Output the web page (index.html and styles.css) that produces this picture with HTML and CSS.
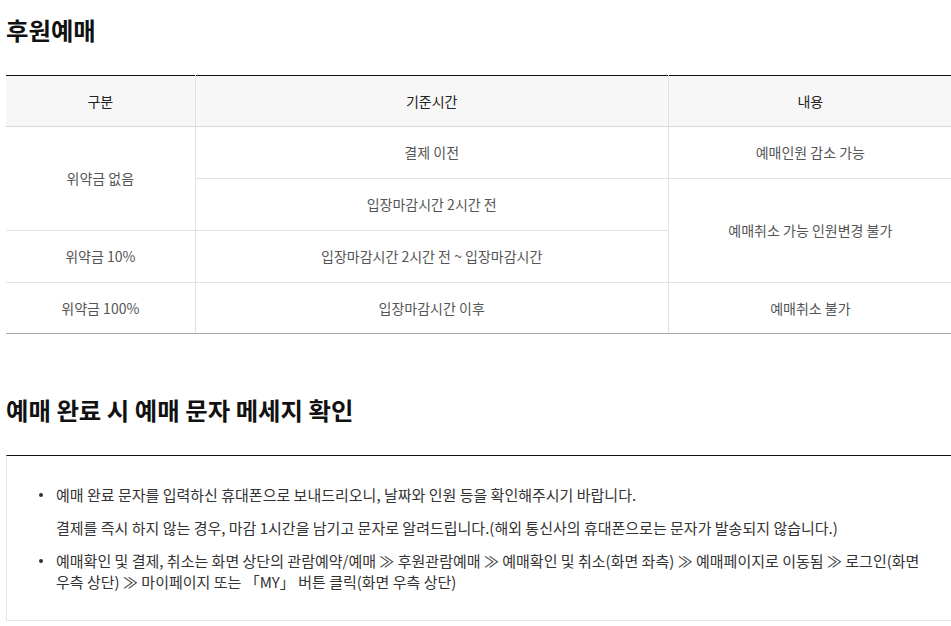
FILE: index.html
```html
<!DOCTYPE html>
<html>
<head>
    <title>후원예매</title>
    <meta charset="UTF-8">
    <link rel="stylesheet" href="styles.css">
</head>
<body>
    <div class="wrap">
        <h2 class="title">후원예매</h2>

        <table class="fee-table">
            <colgroup>
                <col class="col-type">
                <col class="col-time">
                <col class="col-desc">
            </colgroup>
            <thead>
                <tr>
                    <th class="first">구분</th>
                    <th>기준시간</th>
                    <th>내용</th>
                </tr>
            </thead>
            <tbody>
                <tr>
                    <td class="first" rowspan="2">위약금 없음</td>
                    <td>결제 이전</td>
                    <td>예매인원 감소 가능</td>
                </tr>
                <tr>
                    <td>입장마감시간 2시간 전</td>
                    <td rowspan="2">예매취소 가능 인원변경 불가</td>
                </tr>
                <tr>
                    <td class="first">위약금 10%</td>
                    <td>입장마감시간 2시간 전 ~ 입장마감시간</td>
                </tr>
                <tr>
                    <td class="first">위약금 100%</td>
                    <td>입장마감시간 이후</td>
                    <td>예매취소 불가</td>
                </tr>
            </tbody>
        </table>

        <h2 class="title title-second">예매 완료 시 예매 문자 메세지 확인</h2>

        <div class="notice-box">
            <ul>
                <li>
                    <p>예매 완료 문자를 입력하신 휴대폰으로 보내드리오니, 날짜와 인원 등을 확인해주시기 바랍니다.</p>
                    <p>결제를 즉시 하지 않는 경우, 마감 1시간을 남기고 문자로 알려드립니다.(해외 통신사의 휴대폰으로는 문자가 발송되지 않습니다.)</p>
                </li>
                <li>
                    <p>예매확인 및 결제, 취소는 화면 상단의 관람예약/예매 ≫ 후원관람예매 ≫ 예매확인 및 취소(화면 좌측) ≫ 예매페이지로 이동됨 ≫ 로그인(화면 우측 상단) ≫ 마이페이지 또는 「MY」 버튼 클릭(화면 우측 상단)</p>
                </li>
            </ul>
        </div>
    </div>
</body>
</html>
```

FILE: styles.css
```css
html, body {
    margin: 0;
    padding: 0;
    overflow: hidden;
    background: #fff;
}
body {
    font-family: "Noto Sans CJK KR", "Noto Sans", sans-serif;
    font-size: 14px;
    color: #333;
}
.wrap {
    width: 946px;
    margin-left: 6px;
}
.title {
    margin: 12px 0 27px;
    font-size: 24.4px;
    line-height: 36px;
    font-weight: 700;
    color: #111;
}
.title-second {
    margin-top: 58px;
    margin-bottom: 27px;
}
.fee-table {
    width: 100%;
    border-collapse: collapse;
    table-layout: fixed;
    border-top: 1px solid #111;
    border-bottom: 1px solid #aaa;
}
.col-type { width: 20%; }
.col-time { width: 50%; }
.col-desc { width: 30%; }
.fee-table th,
.fee-table td {
    text-align: center;
    line-height: 21px;
    border-left: 1px solid #e2e2e2;
    border-bottom: 1px solid #e2e2e2;
    padding: 0;
    height: 51px;
    color: #555;
    font-weight: 400;
}
.fee-table th {
    background: #f7f7f7;
    color: #222;
    height: 50px;
    border-bottom-color: #d8d8d8;
}
.fee-table .first {
    border-left: none;
}
.fee-table tbody tr:last-child td {
    height: 50px;
    border-bottom: 1px solid #aaa;
}
.notice-box {
    border: 1px solid #e5e5e5;
    border-top: 1px solid #111;
    padding: 28px 20px 28px 0;
}
.notice-box ul {
    margin: 0;
    padding: 0 0 0 49px;
    list-style: none;
}
.notice-box li {
    position: relative;
    margin-bottom: 12px;
}
.notice-box li:last-child {
    margin-bottom: 0;
}
.notice-box li::before {
    content: "";
    position: absolute;
    left: -17px;
    top: 9px;
    width: 4px;
    height: 4px;
    border-radius: 50%;
    background: #333;
}
.notice-box p {
    margin: 0 0 12px;
    font-size: 15px;
    line-height: 21px;
    color: #333;
}
.notice-box p:last-child {
    margin-bottom: 0;
}
```
